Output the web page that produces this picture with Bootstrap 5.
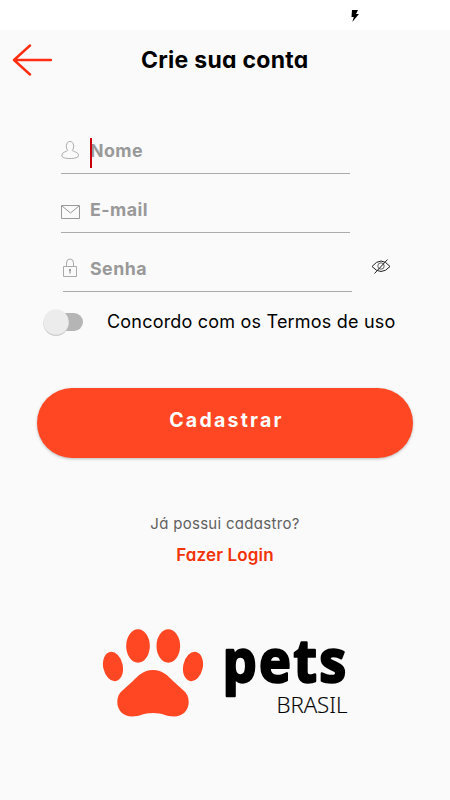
<!DOCTYPE html>
<html lang="pt-BR">
<head>
<meta charset="utf-8">
<meta name="viewport" content="width=device-width, initial-scale=1">
<title>Crie sua conta</title>
<link href="https://cdn.jsdelivr.net/npm/bootstrap@5.3.0/dist/css/bootstrap.min.css" rel="stylesheet">
<style>
body{font-family:Inter,"Open Sans",sans-serif;font-feature-settings:"cv11","ss03";background:#fafafa;color:#000;height:800px;overflow:hidden}
.status{height:30px;padding-right:91px}
.topbar{height:60px;padding-left:12px}
.topbar svg{margin-top:-1px}
.topbar h1{font-size:23px;line-height:30px;font-weight:700;margin-left:89px;letter-spacing:.27px}
.signup{padding-top:44px}
.field{height:40px;width:289px;margin-left:61px;border-bottom:1px solid #ababab;position:relative}
.field svg{flex:none}
.field input{border:0;background:none;outline:0;padding:0 0 6px;margin-left:9px;height:34px;width:230px;font-size:17.8px;letter-spacing:.45px;font-weight:700;color:#999}
.field input::placeholder{color:#999;opacity:1}
.caret{position:absolute;left:29px;top:4px;width:2px;height:30px;background:#c8000a}
.field .person{margin-top:-7px}
.mail{margin-top:19px}
.field .envelope{margin-top:-2px}
.field .lock{margin-top:-7px}
.pass{margin-top:19px;margin-left:63px}
.eye{position:absolute;left:308px;top:6px}
.terms{height:30px;margin-top:15px;margin-left:43px}
.track{width:40px;height:26px;flex:none}
.terms label{font-size:18px;margin-left:24px;font-weight:400;line-height:26px;letter-spacing:.2px}
.cta{display:block;width:376px;height:70px;margin:51px 0 0 37px;border:0;border-radius:35px;background:#ff4723;color:#fff;font-size:19.5px;font-weight:700;letter-spacing:2.25px;padding:0 0 4px 3px;box-shadow:0 1px 3px rgba(0,0,0,.25)}
.cta:hover{background:#ff4723;color:#fff}
.ask{font-size:15px;line-height:24px;margin-top:54px;color:#616161;letter-spacing:.3px}
.login{font-size:17px;line-height:26px;margin-top:6px;font-weight:600;color:#f23208;letter-spacing:.15px}
.logo{margin-top:32px}
</style>
</head>
<body>
<header>
  <div class="status bg-white d-flex justify-content-end align-items-start">
    <svg class="mt-2" width="9" height="16" viewBox="0 0 9 16"><path d="M2 2h6L6 6h3L2.300 14 3.800 9H1.500Z" fill="#000"/></svg>
  </div>
  <div class="topbar d-flex align-items-center">
    <svg width="40" height="32" viewBox="0 0 40 32" fill="none" stroke="#ff2d12" stroke-width="2.400" stroke-linecap="round" stroke-linejoin="round"><path d="M18 1.500 2 16l16 14.500M2 16h37"/></svg>
    <h1 class="mb-0 text-nowrap">Crie sua conta</h1>
  </div>
</header>
<main>
  <form class="signup">
    <div class="field d-flex align-items-center">
      <svg class="person" width="20" height="20" viewBox="0 0 20 20" fill="none" stroke="#aaa"><path d="M6.700 10.300C4.700 8.500 4.500 1.500 9 1.500s4.300 7 2.300 8.800c.6 1.500 6.200 1.500 6.200 5 0 2.500-4 3.200-8.500 3.200S.8 17.800.8 15.300c0-3.500 5.300-3.500 5.900-5Z"/></svg>
      <input type="text" placeholder="Nome" aria-label="Nome"><span class="caret"></span>
    </div>
    <div class="field mail d-flex align-items-center">
      <svg class="envelope" width="20" height="16" viewBox="0 0 20 16" fill="none" stroke="#999"><path d="M.5 1.500h18v13H.5ZM1 2l8.500 7L18 2"/></svg>
      <input type="email" placeholder="E-mail" aria-label="E-mail">
    </div>
    <div class="field pass d-flex align-items-center">
      <svg class="lock" width="18" height="20" viewBox="0 0 18 20" fill="none" stroke="#aaa"><path d="M.5 8.500h13v10H.5ZM3.500 8.500V5a3.500 4 0 0 1 7 0v3.500"/><path d="M7 11.500v4" stroke="#888"/><circle cx="7" cy="12" r=".6" stroke="#888"/></svg>
      <input type="password" placeholder="Senha" aria-label="Senha">
      <svg class="eye" width="20" height="17" viewBox="0 0 20 17" fill="none" stroke="#222"><path d="M1 8.500Q10-2.500 19 8.500Q10 18.500 1 8.500Z"/><circle cx="10" cy="8" r="3.200" stroke="#666"/><path d="M3.500 15.500 16.500 1.500"/></svg>
    </div>
    <div class="terms d-flex align-items-center">
      <svg class="track overflow-visible" viewBox="0 0 40 26"><rect x="8" y="4" width="32" height="18" rx="9" fill="#b5b5b5"/><circle cx="13" cy="14.300" r="12.700" fill="#ccc"/><circle cx="13" cy="13" r="12.700" fill="#ececec"/></svg>
      <label class="text-nowrap">Concordo com os Termos de uso</label>
    </div>
    <button type="button" class="btn cta">Cadastrar</button>
  </form>
  <p class="ask text-center mb-0">Já possui cadastro?</p>
  <p class="login text-center mb-0">Fazer Login</p>
  <svg class="logo d-block mx-auto" width="250" height="130" viewBox="100 600 250 130">
    <g fill="#ff4723">
      <ellipse cx="138" cy="646" rx="11.800" ry="16.700"/><ellipse cx="168.300" cy="646" rx="11.800" ry="16.700"/>
      <ellipse cx="113" cy="666.500" rx="9.800" ry="14.800" transform="rotate(-12 113 666.500)"/><ellipse cx="193" cy="666.500" rx="9.800" ry="14.800" transform="rotate(12 193 666.500)"/>
      <path d="M153 670C163 670 168 676 173 681L183 690C187 693 188.700 697 188.700 702C188.700 711 182 716.500 174 716.500C166 716.500 163 713 153 713C143 713 140 716.500 132 716.500C124 716.500 117.300 711 117.300 702C117.300 697 119 693 123 690L133 681C138 676 143 670 153 670Z"/>
    </g>
    <text transform="translate(222.500 682) scale(.9 1)" font-family="Open Sans" font-weight="700" font-size="60" letter-spacing="2.700" stroke="#000" stroke-width="2.400" stroke-linejoin="round">pets</text>
    <text x="276.500" y="713" font-family="Open Sans" font-weight="300" font-size="22" textLength="71" lengthAdjust="spacingAndGlyphs" stroke="#000" stroke-width=".2">BRASIL</text>
  </svg>
</main>
</body>
</html>
